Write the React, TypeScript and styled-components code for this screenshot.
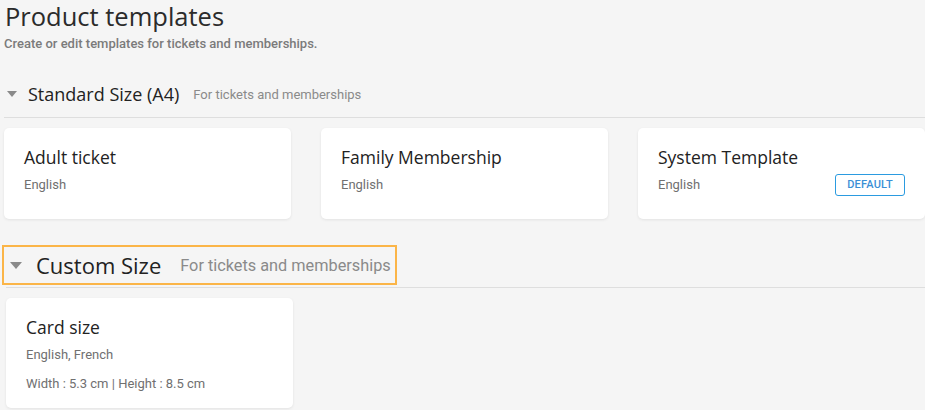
import React from 'react'
import styled, {createGlobalStyle} from 'styled-components'

const GlobalStyle = createGlobalStyle`
  html, body {
    margin: 0;
    padding: 0;
    background: #f5f5f5;
  }
  body {
    font-family: Roboto, 'Liberation Sans', sans-serif;
    overflow: hidden;
  }
`

const headingFont = `'Open Sans', 'Liberation Sans', sans-serif`

const Page = styled.div`
  width: 925px;
  height: 410px;
  padding-left: 4px;
  box-sizing: border-box;
  overflow: hidden;
`

const PageTitle = styled.h1`
  margin: 0;
  padding-left: 1px;
  font-family: ${headingFont};
  font-weight: 400;
  font-size: 25.5px;
  line-height: 32px;
  color: #2b2b2b;
`

const PageSubtitle = styled.p`
  margin: 4px 0 0;
  font-size: 13px;
  font-weight: 500;
  line-height: 16px;
  color: #7b7b7b;
`

const SectionBlock = styled.section<{$shift?: number}>`
  margin-top: 26px;
  margin-left: ${(p) => p.$shift ?? 0}px;
`

const HeaderBox = styled.div<{$large?: boolean; $highlight?: boolean}>`
  display: inline-flex;
  align-items: center;
  box-sizing: border-box;
  height: ${(p) => (p.$large ? 40 : 32)}px;
  padding: 0 ${(p) => (p.$large ? 4 : 0)}px 0 ${(p) => (p.$large ? 6 : 3)}px;
  margin-left: ${(p) => (p.$highlight ? -4 : 0)}px;
  border: ${(p) => (p.$highlight ? '2px solid #fbb548' : 'none')};
  gap: ${(p) => (p.$large ? 14 : 11)}px;
`

const Caret = styled.span<{$large?: boolean}>`
  width: 0;
  height: 0;
  border-left: ${(p) => (p.$large ? 6.5 : 5.5)}px solid transparent;
  border-right: ${(p) => (p.$large ? 6.5 : 5.5)}px solid transparent;
  border-top: ${(p) => (p.$large ? 7 : 6)}px solid #8a8a8a;
`

const SectionTitle = styled.h2<{$large?: boolean}>`
  margin: 0;
  font-family: ${headingFont};
  font-weight: 500;
  font-size: ${(p) => (p.$large ? 22 : 18)}px;
  color: #222;
  white-space: nowrap;
`

const SectionHint = styled.span<{$large?: boolean}>`
  margin-left: ${(p) => (p.$large ? 5 : 3)}px;
  font-size: ${(p) => (p.$large ? 16.3 : 13)}px;
  color: #8a8a8a;
  white-space: nowrap;
`

const Divider = styled.div<{$gap: number}>`
  margin-top: ${(p) => p.$gap}px;
  height: 1px;
  background: #dedede;
`

const CardGrid = styled.div`
  display: grid;
  grid-template-columns: repeat(3, 287px);
  gap: 30px;
  margin-top: 10px;
`

const Card = styled.div`
  box-sizing: border-box;
  min-height: 91px;
  padding: 18px 20px 13px;
  background: #fff;
  border-radius: 5px;
  box-shadow: 0 1px 3px rgba(0, 0, 0, 0.08);
`

const CardTitle = styled.div`
  font-family: ${headingFont};
  font-weight: 500;
  font-size: 17.5px;
  line-height: 22px;
  color: #222;
`

const MetaRow = styled.div<{$gap: number}>`
  display: flex;
  align-items: center;
  justify-content: space-between;
  margin-top: ${(p) => p.$gap}px;
  min-height: 22px;
  font-size: 13px;
  line-height: 16px;
  color: #707070;
`

const Badge = styled.span`
  display: inline-flex;
  align-items: center;
  justify-content: center;
  box-sizing: border-box;
  width: 70px;
  height: 22px;
  border: 1px solid #2b9be0;
  border-radius: 3px;
  font-size: 11px;
  font-weight: 500;
  letter-spacing: 0.2px;
  color: #3b8fd6;
`

type Template = {
  name: string
  languages: string
  size?: string
  isDefault?: boolean
}

const standard: Template[] = [
  {name: 'Adult ticket', languages: 'English'},
  {name: 'Family Membership', languages: 'English'},
  {name: 'System Template', languages: 'English', isDefault: true},
]

const custom: Template[] = [
  {name: 'Card size', languages: 'English, French', size: 'Width : 5.3 cm | Height : 8.5 cm'},
]

const TemplateCard: React.FC<{t: Template}> = ({t}) => (
  <Card>
    <CardTitle>{t.name}</CardTitle>
    <MetaRow $gap={6}>
      <span>{t.languages}</span>
      {t.isDefault && <Badge>DEFAULT</Badge>}
    </MetaRow>
    {t.size && <MetaRow $gap={7}>{t.size}</MetaRow>}
  </Card>
)

const Section: React.FC<{
  title: string
  items: Template[]
  large?: boolean
}> = ({title, items, large}) => (
  <SectionBlock $shift={large ? 2 : 0}>
    <HeaderBox $large={large} $highlight={large}>
      <Caret $large={large} />
      <SectionTitle $large={large}>{title}</SectionTitle>
      <SectionHint $large={large}>For tickets and memberships</SectionHint>
    </HeaderBox>
    <Divider $gap={large ? 2 : 7} />
    <CardGrid>
      {items.map((t) => (
        <TemplateCard key={t.name} t={t} />
      ))}
    </CardGrid>
  </SectionBlock>
)

export default function App() {
  return (
    <>
      <GlobalStyle />
      <Page>
        <PageTitle>Product templates</PageTitle>
        <PageSubtitle>Create or edit templates for tickets and memberships.</PageSubtitle>
        <Section title="Standard Size (A4)" items={standard} />
        <Section title="Custom Size" items={custom} large />
      </Page>
    </>
  )
}
